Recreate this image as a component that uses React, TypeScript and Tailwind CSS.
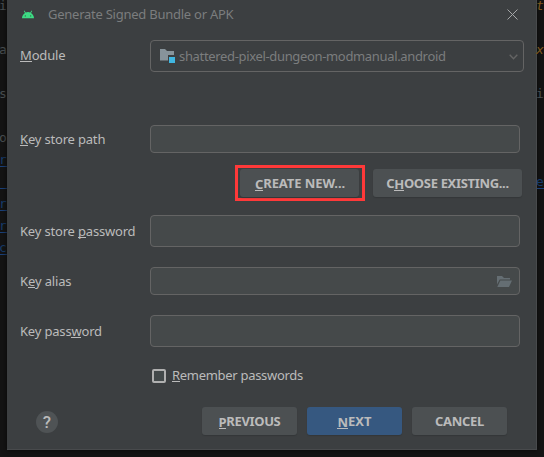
import type { ReactNode } from "react";

const U = ({ children }: { children: ReactNode }) => (
  <span className="inline-block h-4 border-b border-current leading-[18px]">{children}</span>
);

const Label = ({ className = "", children }: { className?: string; children: ReactNode }) => (
  <label className={`ml-[13px] w-[130px] shrink-0 whitespace-pre leading-[18px] tracking-[-0.18px] ${className}`}>{children}</label>
);

const Field = ({ className, children }: { className: string; children?: ReactNode }) => (
  <div className={`flex w-[370px] items-center rounded-[4px] border border-[#646464] bg-[#45494a] ${className}`}>{children}</div>
);

const Button = ({ className, children }: { className: string; children: ReactNode }) => (
  <button className={`flex h-7 items-center justify-center whitespace-pre rounded-[3px] font-bold leading-[18px] shadow-[0_1px_1px_#343739] ${className}`}>
    {children}
  </button>
);

const leftCode = ["i", "", "a", "", "s", "", "o", "r", " ", "r", "r", "c"];
const rightCode = ["t", "", "x", "", "i", "", "", "", "e", "", "", ""];
const rightColors = ["text-[#80591f] italic", "", "text-[#80591f] italic", "", "text-[#4b5052]", "", "", "", "text-[#173c6b]", "", "", ""];

export default function App() {
  return (
    <div className="flex h-[457px] w-[544px] overflow-hidden bg-[#141414] font-['Noto_Sans',sans-serif] text-[13px] text-[#bbbbbb]">
      <div className="w-[7px] shrink-0 font-['DejaVu_Sans_Mono',monospace]">
        <div className="-mt-[9px]">
          {leftCode.map((c, i) => (
            <div key={i} className={`h-[22px] whitespace-pre leading-[29px] ${i > 6 ? "border-b border-[#1b417a] text-[#173c6b]" : "text-[#4b5052]"}`}>
              <span className="-ml-px">{c}</span>
            </div>
          ))}
        </div>
      </div>

      <main className="h-[450px] w-[530px] shrink-0 border-b border-r border-[#484a4c] bg-[#3c3f41] shadow-[0_0_5px_#080808]">
        <header className="flex h-[30px] items-center text-[#7b7d7e]">
          <svg className="ml-[15px] mr-[14px] mt-[-2px] h-[9px] w-[12px]" viewBox="0 0 12 9">
            <path d="M0 8.3C.1 5.9 1.2 4.1 3 3L1.8 1l.6-.4L3.7 2.6a6 6 0 0 1 4.6 0L9.6.6l.6.4L9 3c1.8 1.1 2.9 2.9 3 5.3z" fill="#3ddc84" />
            <circle cx="3.3" cy="5.9" r=".6" fill="#315a43" />
            <circle cx="8.7" cy="5.9" r=".6" fill="#315a43" />
          </svg>
          <span className="mb-0.5 whitespace-pre leading-[18px] tracking-[-0.25px]">Generate Signed Bundle or APK</span>
          <svg className="ml-auto mr-[18px] mt-[-2px] h-[11px] w-[11px]" viewBox="0 0 11 11" stroke="#a5a7a8" strokeWidth="1">
            <path d="m.5.5 10 10m0-10-10 10" />
          </svg>
        </header>

        <div className="mt-[10px] flex h-8 items-center">
          <Label className="mb-0.5"><U>M</U>odule</Label>
          <div className="flex h-8 w-[374px] items-center rounded-[4px] border border-[#646464] text-[#7b7d7e]">
            <svg className="ml-[9px] mr-1 h-[14px] w-[15px]" viewBox="0 0 15 14">
              <path d="M0 0h5l2 2h7v4H8v5.5H0z" fill="#87939a" />
              <path d="M9 8h6v6H9z" fill="#40b6e0" />
            </svg>
            <span className="leading-[18px] tracking-[-0.34px]">shattered-pixel-dungeon-modmanual.android</span>
            <svg className="ml-auto mr-[5px] mt-[2px] h-[6px] w-[9px]" viewBox="0 0 9 6" fill="none" stroke="#646464" strokeWidth="1.4">
              <path d="m.7.8 3.8 4 3.8-4" />
            </svg>
          </div>
        </div>

        <div className="mt-[53px] flex h-7 items-center">
          <Label><U>K</U>ey store path</Label>
          <Field className="h-7" />
        </div>

        <div className="mt-3 flex h-9 items-center justify-end gap-2 pr-[14px]">
          <div className="flex h-9 w-[130px] items-center border-[3px] border-[#ff3939] pl-[2px]">
            <Button className="w-[119px] bg-[#4c5052] pl-px tracking-[-0.08px]"><U>C</U>REATE NEW...</Button>
          </div>
          <Button className="w-[149px] bg-[#4c5052] tracking-[-0.33px]">C<U>H</U>OOSE EXISTING...</Button>
        </div>

        <div className="mt-[14px] flex h-8 items-center">
          <Label>Key store <U>p</U>assword</Label>
          <Field className="h-8" />
        </div>
        <div className="mt-5 flex h-7 items-center">
          <Label>K<U>e</U>y alias</Label>
          <Field className="h-7">
            <svg className="ml-auto mr-[7px] h-[11px] w-[15px]" viewBox="0 0 15 11" fill="#656e73">
              <path d="M0 0h5l2 2h6v1.5H2.7L0 8.5z" />
              <path d="M3.3 4.5H15L12 11H.3z" />
            </svg>
          </Field>
        </div>
        <div className="mt-5 flex h-8 items-center">
          <Label>Key pass<U>w</U>ord</Label>
          <Field className="h-8" />
        </div>

        <div className="ml-[145px] mt-[19px] flex h-5 items-center">
          <span className="mr-[6px] h-[14px] w-[14px] rounded-[2px] border-2 border-[#b0b0b0] bg-[#43494a]" />
          <span className="mb-0.5 leading-[18px] tracking-[-0.3px]"><U>R</U>emember passwords</span>
        </div>

        <footer className="mt-[21px] flex h-7 items-center gap-[10px] pl-[29px]">
          <span className="mr-[134px] mt-[1px] flex h-[22px] w-[22px] items-center justify-center rounded-full bg-[#4f5355] font-['Roboto',sans-serif] text-[17px] font-medium leading-[22px]">?</span>
          <Button className="w-[95px] bg-[#4c5052] tracking-[-0.35px]"><U>P</U>REVIOUS</Button>
          <Button className="w-[95px] bg-[#365880]"><U>N</U>EXT</Button>
          <Button className="w-[95px] bg-[#4c5052] tracking-[-0.3px]">CANCEL</Button>
        </footer>
      </main>

      <div className="w-[7px] shrink-0 font-['DejaVu_Sans_Mono',monospace]">
        <div className="-mt-[9px]">
          {rightCode.map((c, i) => (
            <div key={i} className={`h-[22px] leading-[29px] ${rightColors[i]} ${i === 8 ? "border-b border-[#1b417a]" : ""}`}>
              <span className="-ml-px">{c}</span>
            </div>
          ))}
        </div>
      </div>
    </div>
  );
}
